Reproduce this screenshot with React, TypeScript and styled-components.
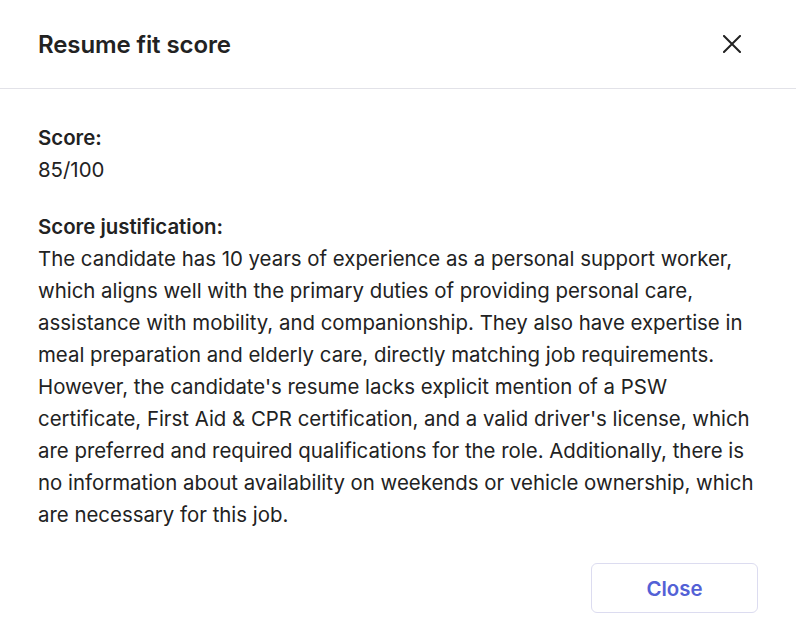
import React from 'react';
import styled, { createGlobalStyle } from 'styled-components';

const GlobalStyle = createGlobalStyle`
  html, body {
    margin: 0;
    padding: 0;
    background: #ffffff;
  }
  body {
    font-family: Inter, "Noto Sans", sans-serif;
    color: #222222;
  }
`;

const justification =
  "The candidate has 10 years of experience as a personal support worker, which aligns well with the primary duties of providing personal care, assistance with mobility, and companionship. They also have expertise in meal preparation and elderly care, directly matching job requirements. However, the candidate's resume lacks explicit mention of a PSW certificate, First Aid & CPR certification, and a valid driver's license, which are preferred and required qualifications for the role. Additionally, there is no information about availability on weekends or vehicle ownership, which are necessary for this job.";

const CloseIcon = () => (
  <svg width="18" height="18" viewBox="0 0 18 18" fill="none">
    <path d="M1 1L17 17M17 1L1 17" stroke="#222222" strokeWidth="2" strokeLinecap="square" />
  </svg>
);

const App = () => (
  <Modal>
    <GlobalStyle />
    <Header>
      <Title>Resume fit score</Title>
      <IconButton aria-label="Close">
        <CloseIcon />
      </IconButton>
    </Header>
    <Body>
      <Section>
        <Label>Score:</Label>
        <Text>85/100</Text>
      </Section>
      <Section>
        <Label>Score justification:</Label>
        <Text>{justification}</Text>
      </Section>
    </Body>
    <Footer>
      <Button>Close</Button>
    </Footer>
  </Modal>
);

export default App;

const Modal = styled.div`
  width: 796px;
  min-height: 100vh;
  display: flex;
  flex-direction: column;
  background: #ffffff;
`;

const Header = styled.div`
  flex-shrink: 0;
  height: 89px;
  box-sizing: border-box;
  display: flex;
  align-items: center;
  justify-content: space-between;
  padding: 0 50px 0 38px;
  border-bottom: 1px solid #e2e2e8;
`;

const Title = styled.h2`
  margin: 0;
  font-size: 24px;
  font-weight: 600;
  letter-spacing: -0.1px;
  color: #222222;
`;

const IconButton = styled.button`
  width: 28px;
  height: 28px;
  padding: 0;
  border: none;
  background: none;
  display: flex;
  align-items: center;
  justify-content: center;
`;

const Body = styled.div`
  padding: 33px 34px 0 38px;
  display: flex;
  flex-direction: column;
  gap: 25px;
`;

const Section = styled.div`
  display: flex;
  flex-direction: column;
`;

const Label = styled.div`
  font-size: 20.4px;
  font-weight: 600;
  line-height: 32px;
`;

const Text = styled.div`
  font-size: 20.4px;
  line-height: 32px;
`;

const Footer = styled.div`
  display: flex;
  justify-content: flex-end;
  padding: 32px 38px 0;
`;

const Button = styled.button`
  width: 167px;
  height: 50px;
  border: 1px solid #dcdcf0;
  border-radius: 6px;
  background: #ffffff;
  color: #5361d6;
  font-family: Inter, "Noto Sans", sans-serif;
  font-size: 20.4px;
  font-weight: 600;
`;
